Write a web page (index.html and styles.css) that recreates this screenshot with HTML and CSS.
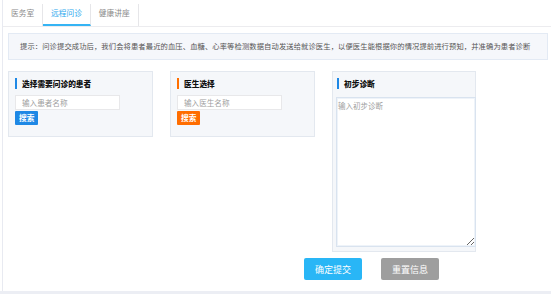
FILE: index.html
```html
<!DOCTYPE html>
<html lang="zh-CN">
<head>
    <meta charset="UTF-8">
    <meta name="viewport" content="width=device-width, initial-scale=1.0">
    <title>远程问诊</title>
    <link rel="stylesheet" href="styles.css">
</head>
<body>
    <div class="panel">
        <nav class="tabs">
            <a href="#" class="tab">医务室</a>
            <a href="#" class="tab active">远程问诊</a>
            <a href="#" class="tab">健康讲座</a>
        </nav>
        <div class="content">
            <div class="tip">提示：问诊提交成功后，我们会将患者最近的血压、血糖、心率等检测数据自动发送给就诊医生，以便医生能根据你的情况提前进行预知，并准确为患者诊断</div>
            <div class="cards">
                <div class="card">
                    <div class="card-title blue">选择需要问诊的患者</div>
                    <input class="name-input" type="text" placeholder="输入患者名称">
                    <button class="search blue">搜索</button>
                </div>
                <div class="card">
                    <div class="card-title orange">医生选择</div>
                    <input class="name-input" type="text" placeholder="输入医生名称">
                    <button class="search orange">搜索</button>
                </div>
                <div class="card diag">
                    <div class="card-title blue">初步诊断</div>
                    <textarea class="diag-input" placeholder="输入初步诊断"></textarea>
                </div>
            </div>
            <div class="actions">
                <button class="btn submit">确定提交</button>
                <button class="btn reset">重置信息</button>
            </div>
        </div>
    </div>
    <div class="page-foot"></div>
</body>
</html>
```

FILE: styles.css
```css
html, body {
    margin: 0;
    padding: 0;
    height: 294px;
    overflow: hidden;
    background: #fff;
}
body {
    font-family: "Noto Sans CJK SC", "Noto Sans", sans-serif;
    font-size: 7.7px;
    color: #555;
}
.panel {
    box-sizing: border-box;
    height: 291px;
    margin-left: 2px;
    border-left: 1px solid #e8eaf1;
    background: #fff;
}
.page-foot {
    height: 3px;
    background: #eceef4;
}
.tabs {
    display: flex;
    height: 26px;
    border-bottom: 1px solid #ececef;
}
.tab {
    margin-top: 4px;
    height: 22px;
    line-height: 18px;
    padding: 0 8px;
    border-right: 1px solid #e6e6e9;
    color: #8a8a8a;
    text-decoration: none;
    box-sizing: border-box;
}
.tab.active {
    color: #2aa8ee;
    border-bottom: 2px solid #35b4f4;
}
.content {
    padding: 6px 3px 0 5px;
}
.tip {
    box-sizing: border-box;
    height: 27px;
    line-height: 25px;
    padding-left: 11px;
    border: 1px solid #e3eaf4;
    background: #f5f7fb;
    color: #555;
    font-size: 7.3px;
    letter-spacing: 0.1px;
    white-space: nowrap;
    overflow: hidden;
}
.cards {
    display: flex;
    align-items: flex-start;
    gap: 17px;
    margin-top: 11px;
}
.card {
    box-sizing: border-box;
    width: 145px;
    padding: 6px 7px 11px 6px;
    border: 1px solid #e3e8ef;
    background: #f5f7fa;
}
.card-title {
    line-height: 11px;
    padding-left: 5px;
    border-left: 2px solid #1e88e5;
    color: #111;
    font-weight: 900;
}
.card-title.orange {
    border-left-color: #ff6f00;
}
.name-input {
    display: block;
    box-sizing: border-box;
    width: 105px;
    height: 15px;
    margin: 6px 0 0;
    padding: 0 6px;
    border: 1px solid #e8e8ea;
    background: #fff;
    font-family: inherit;
    font-size: 7.6px;
    outline: none;
}
.name-input::placeholder,
.diag-input::placeholder {
    color: #a0a0a0;
}
.search {
    display: block;
    height: 14px;
    margin-top: 1px;
    padding: 0 4px;
    border: none;
    border-radius: 1px;
    color: #fff;
    font-family: inherit;
    font-size: 7.7px;
    font-weight: bold;
    line-height: 14px;
}
.search.blue {
    background: #1e88e5;
}
.search.orange {
    background: #ff6d00;
}
.card.diag {
    width: 144px;
    padding: 6px 1px 4px 3px;
}
.card.diag .card-title {
    margin-left: 1px;
}
.diag-input {
    display: block;
    box-sizing: border-box;
    width: 140px;
    height: 150px;
    margin-top: 8px;
    padding: 3px 1px;
    border: 1px solid #d9e3ef;
    box-shadow: inset 0 0 0 1px #eef3f9;
    background: #fff;
    font-family: inherit;
    font-size: 7.5px;
    line-height: 9px;
    outline: none;
}
.actions {
    display: flex;
    gap: 19px;
    margin-top: 6px;
    padding-left: 296px;
}
.btn {
    width: 58px;
    height: 22px;
    border: none;
    border-radius: 2px;
    color: #fff;
    font-family: inherit;
    font-size: 9px;
    padding: 0;
}
.btn.submit {
    background: #29b6f6;
}
.btn.reset {
    background: #9e9e9e;
}
```
